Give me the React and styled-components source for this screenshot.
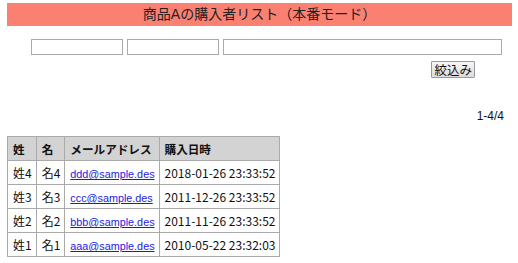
import React from 'react'
import styled, { createGlobalStyle } from 'styled-components'

const rows = [
  { sei: '姓4', mei: '名4', mail: 'ddd@sample.des', date: '2018-01-26 23:33:52' },
  { sei: '姓3', mei: '名3', mail: 'ccc@sample.des', date: '2011-12-26 23:33:52' },
  { sei: '姓2', mei: '名2', mail: 'bbb@sample.des', date: '2011-11-26 23:33:52' },
  { sei: '姓1', mei: '名1', mail: 'aaa@sample.des', date: '2010-05-22 23:32:03' },
]

const Global = createGlobalStyle`
  body {
    margin: 0;
    background: #fff;
    font-family: "Liberation Sans", "Noto Sans CJK JP", sans-serif;
    color: #111;
  }
`

const Page = styled.div`
  padding: 3px 6px 0 7px;
`

const Header = styled.h1`
  margin: 0;
  height: 23px;
  line-height: 23px;
  background: #fa8072;
  text-align: center;
  font-size: 14px;
  font-weight: normal;
  color: #222;
`

const Form = styled.div`
  display: flex;
  flex-direction: column;
  align-items: flex-end;
  padding: 13px 10px 0 24px;
`

const Fields = styled.div`
  display: flex;
  gap: 4px;
  align-self: stretch;
`

const Field = styled.input`
  box-sizing: border-box;
  width: ${p => p.$w}px;
  height: 16px;
  border: 1px solid #aaa;
  padding: 0;
  margin: 0;
`

const Button = styled.button`
  margin: 6px 27px 0 0;
  height: 17px;
  padding: 0 2px;
  font-size: 12.5px;
  font-family: "Noto Sans CJK JP", sans-serif;
  line-height: 15px;
  border: 1px solid #999;
  border-radius: 1px;
  background: linear-gradient(#f6f6f6, #dcdcdc);
  color: #111;
`

const Count = styled.div`
  text-align: right;
  font-size: 12px;
  padding: 31px 8px 0 0;
  height: 18px;
`

const Table = styled.table`
  margin-top: 9px;
  border-collapse: collapse;
  border: 1px solid #aaa;
  font-size: 12px;
`

const Th = styled.th`
  background: #d3d3d3;
  border: 1px solid #aaa;
  height: 23px;
  padding: 0 4px 0 5px;
  text-align: left;
  font-size: 11.6px;
  font-family: "Noto Sans CJK JP", sans-serif;
`

const Td = styled.td`
  border: 1px solid #aaa;
  height: 23px;
  padding: 0 4px 0 5px;
  font-size: 12px;
  font-family: "Noto Sans CJK JP", "Liberation Sans", sans-serif;
`

const Mail = styled.a`
  color: #1a1adb;
  text-decoration: underline;
  font-family: "Liberation Sans", sans-serif;
  font-size: 10.8px;
`

export default function App() {
  return (
    <>
      <Global />
      <Page>
        <Header>商品Aの購入者リスト（本番モード）</Header>
        <Form>
          <Fields>
            <Field $w={92} />
            <Field $w={92} />
            <Field $w={279} />
          </Fields>
          <Button>絞込み</Button>
        </Form>
        <Count>1-4/4</Count>
        <Table>
          <thead>
            <tr>
              <Th>姓</Th>
              <Th>名</Th>
              <Th>メールアドレス</Th>
              <Th>購入日時</Th>
            </tr>
          </thead>
          <tbody>
            {rows.map(r => (
              <tr key={r.mail}>
                <Td>{r.sei}</Td>
                <Td>{r.mei}</Td>
                <Td><Mail href="#">{r.mail}</Mail></Td>
                <Td>{r.date}</Td>
              </tr>
            ))}
          </tbody>
        </Table>
      </Page>
    </>
  )
}
